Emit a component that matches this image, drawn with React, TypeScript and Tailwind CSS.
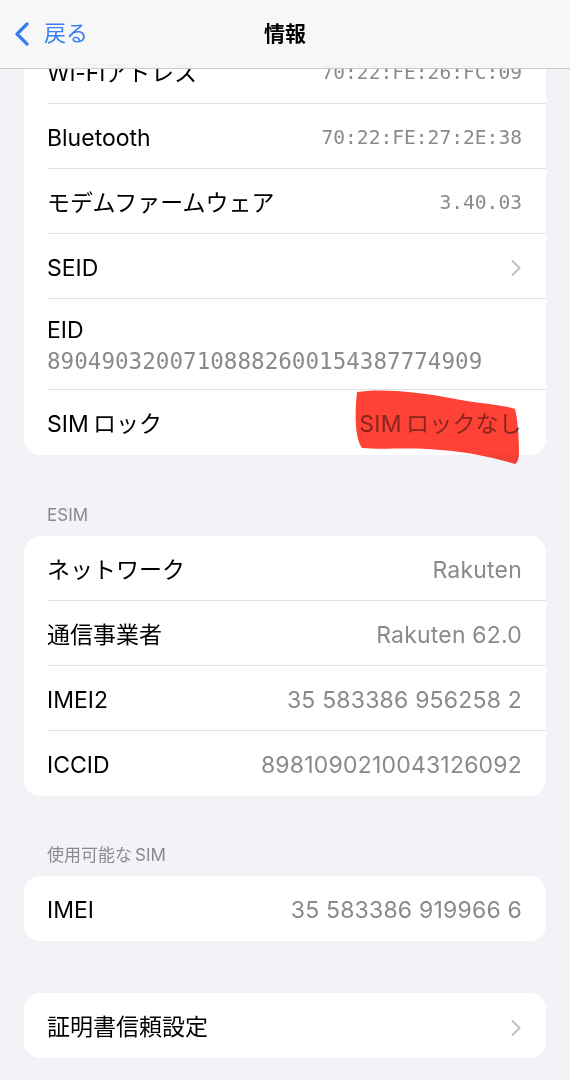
import React from 'react';

const jp = "font-['Inter','Noto_Sans_CJK_JP',sans-serif]";
const mono = "font-['DejaVu_Sans_Mono','Noto_Sans_CJK_JP',monospace]";

type RowProps = {
  label: string;
  value?: string;
  mono?: boolean;
  chevron?: boolean;
  last?: boolean;
};

function Chevron() {
  return (
    <svg width="12" height="18" viewBox="0 0 12 18" fill="none">
      <path d="M2.5 2 L9.5 9 L2.5 16" stroke="#c4c4c7" strokeWidth="2.2" strokeLinecap="round" strokeLinejoin="round" />
    </svg>
  );
}

function Row({ label, value, mono: isMono, chevron, last }: RowProps) {
  return (
    <div className="pl-[23px]">
      <div
        className={`flex h-[65px] items-center justify-between pr-[24px] pt-[4px] ${
          last ? '' : 'border-b border-[#e1e1e4]'
        }`}
      >
        <span className="text-[23px] text-black">{label}</span>
        {value && (
          <span className={`text-[#8a8a8e] ${isMono ? `${mono} text-[19.6px]` : 'text-[23px] tracking-[0.2px]'}`}>
            {value}
          </span>
        )}
        {chevron && <Chevron />}
      </div>
    </div>
  );
}

function Card({ children }: { children: React.ReactNode }) {
  return <div className="overflow-hidden rounded-[16px] bg-white">{children}</div>;
}

function Header({ text, pt }: { text: string; pt: string }) {
  return (
    <div className={`${pt} pb-[10px] pl-[23px] text-[17px] leading-[21px] text-[#8a8a8e]`}>{text}</div>
  );
}

export default function App() {
  return (
    <div className={`relative h-[1080px] w-[570px] overflow-hidden bg-[#f2f2f7] ${jp}`}>
      {/* nav bar over the scrolled list */}
      <div className="absolute inset-x-0 top-0 z-10 h-[69px] border-b border-[#c9c9cc] bg-[#f7f7f7]/[0.97]">
        <div className="flex h-full items-center pb-[1px]">
          <div className="flex items-center pl-[14px]">
            <svg width="16" height="24" viewBox="0 0 16 24" fill="none">
              <path d="M13 2 L3 12 L13 22" stroke="#3a7ff0" strokeWidth="3.2" strokeLinecap="round" strokeLinejoin="round" />
            </svg>
            <span className="ml-[14px] text-[22px] text-[#3a7ff0]">戻る</span>
          </div>
        </div>
        <div className="absolute inset-0 flex items-center justify-center pb-[1px] text-[21px] font-bold text-black">
          情報
        </div>
      </div>

      <div className="px-[24px] pt-[39px]">
        <div className="relative">
          <Card>
            <Row label="Wi-Fiアドレス" value="70:22:FE:26:FC:09" mono />
            <Row label="Bluetooth" value="70:22:FE:27:2E:38" mono />
            <Row label="モデムファームウェア" value="3.40.03" mono />
            <Row label="SEID" chevron />
            <div className="pl-[23px]">
              <div className="flex h-[91px] flex-col justify-center border-b border-[#e1e1e4] pr-[24px] pt-[4px]">
                <span className="text-[23px] leading-[30px] text-black">EID</span>
                <span className={`${mono} text-[22.6px] leading-[32px] text-[#8a8a8e]`}>
                  89049032007108882600154387774909
                </span>
              </div>
            </div>
            <Row label={'SIM\u2009ロック'} value={'SIM\u2009ロックなし'} last />
          </Card>
          {/* red marker scribble */}
          <svg
            className="pointer-events-none absolute left-0 top-[-39px] mix-blend-multiply"
            width="522"
            height="470"
            viewBox="24 0 522 470"
          >
            <path
              d="M357 392 C380 388 420 392 450 398 C480 404 505 405 515 409 C518 420 519 440 519 452 C519 458 518 462 515 464 C495 458 470 452 440 450 C410 447 382 450 362 448 C356 440 354 420 357 392 Z"
              fill="#ff4236"
            />
          </svg>
        </div>

        <Header text="ESIM" pt="pt-[50px]" />
        <Card>
          <Row label="ネットワーク" value="Rakuten" />
          <Row label="通信事業者" value="Rakuten 62.0" />
          <Row label="IMEI2" value="35 583386 956258 2" />
          <Row label="ICCID" value="8981090210043126092" last />
        </Card>

        <Header text={'使用可能な\u2009SIM'} pt="pt-[49px]" />
        <Card>
          <Row label="IMEI" value="35 583386 919966 6" last />
        </Card>

        <div className="h-[52px]" />
        <Card>
          <Row label="証明書信頼設定" chevron last />
        </Card>
      </div>
    </div>
  );
}
